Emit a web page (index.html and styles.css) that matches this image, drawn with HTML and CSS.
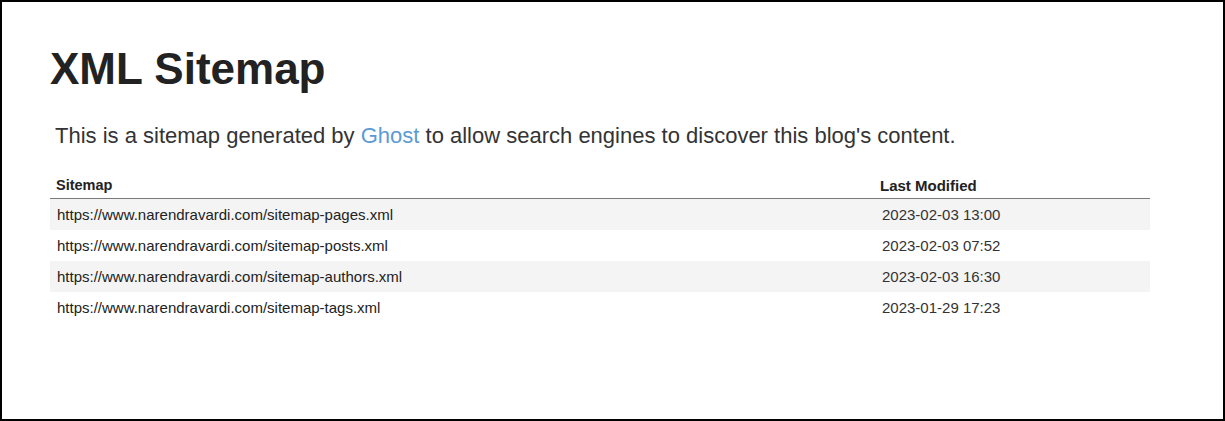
FILE: index.html
```html
<!DOCTYPE html>
<html lang="en">
<head>
<meta charset="utf-8">
<title>XML Sitemap</title>
<link rel="stylesheet" href="styles.css">
</head>
<body>
<div class="page">
  <h1 class="title">XML Sitemap</h1>
  <p class="intro">This is a sitemap generated by <a class="link" href="#">Ghost</a> to allow search engines to discover this blog's content.</p>
  <table class="sitemap">
    <thead>
      <tr>
        <th class="col-loc">Sitemap</th>
        <th class="col-mod">Last Modified</th>
      </tr>
    </thead>
    <tbody>
      <tr><td>https://www.narendravardi.com/sitemap-pages.xml</td><td class="date">2023-02-03 13:00</td></tr>
      <tr><td>https://www.narendravardi.com/sitemap-posts.xml</td><td class="date">2023-02-03 07:52</td></tr>
      <tr><td>https://www.narendravardi.com/sitemap-authors.xml</td><td class="date">2023-02-03 16:30</td></tr>
      <tr><td>https://www.narendravardi.com/sitemap-tags.xml</td><td class="date">2023-01-29 17:23</td></tr>
    </tbody>
  </table>
</div>
</body>
</html>
```

FILE: styles.css
```css
html, body {
  margin: 0;
  padding: 0;
}
body {
  box-sizing: border-box;
  height: 100vh;
  border: 2px solid #000;
  background: #fff;
  font-family: "Liberation Sans", Arial, Helvetica, sans-serif;
  color: #222;
}
.page {
  padding: 41px 0 0 48px;
}
.title {
  margin: 0;
  font-size: 44px;
  font-weight: bold;
  line-height: 51px;
  color: #222;
}
.intro {
  margin: 30px 0 0 5px;
  font-size: 22px;
  line-height: 23px;
  color: #333;
}
.link {
  color: #5b9bd5;
  text-decoration: none;
}
.sitemap {
  margin-top: 31px;
  width: 1100px;
  border-collapse: collapse;
  border-spacing: 0;
}
.sitemap th {
  text-align: left;
  font-size: 14.5px;
  font-weight: bold;
  line-height: 15px;
  color: #222;
  padding: 0 0 5px 6px;
  border-bottom: 1px solid #7a7a7a;
}
.sitemap .col-mod {
  width: 270px;
  font-size: 15px;
}
.sitemap td {
  font-size: 15px;
  line-height: 17px;
  padding: 7px 0 7px 7px;
  color: #222;
}
.sitemap td.date {
  padding-left: 8px;
  color: #333;
}
.sitemap tbody tr:nth-child(odd) td {
  background: #f4f4f4;
}
```
